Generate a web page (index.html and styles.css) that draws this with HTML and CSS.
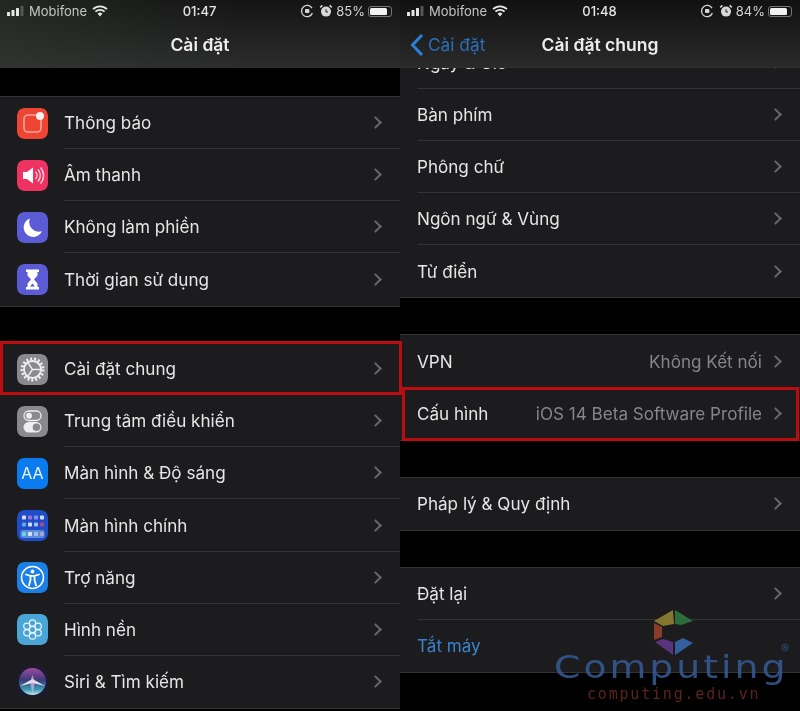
FILE: index.html
```html
<!DOCTYPE html>
<html lang="vi">
<head>
  <meta charset="UTF-8">
  <title>Cài đặt</title>
  <link rel="stylesheet" href="styles.css">
</head>
<body>

  <div class="screens">

    <section class="panel panel-left">
      <header class="top top-left">
        <div class="status">
          <div class="status-side">
            <svg class="signal" width="18" height="10" viewBox="0 0 18 10"><rect x="0" y="6" width="3" height="4" rx=".5" fill="#e6e6e6"/><rect x="4.5" y="4" width="3" height="6" rx=".5" fill="#e6e6e6"/><rect x="9" y="2" width="3" height="8" rx=".5" fill="#e6e6e6"/><rect x="13.5" y="0" width="3" height="10" rx=".5" fill="#555"/></svg>
            <span class="carrier">Mobifone</span>
            <svg class="wifi" width="16" height="12" viewBox="0 0 16 12"><path d="M1 4.2a10 10 0 0 1 14 0M3.4 6.7a6.6 6.6 0 0 1 9.2 0" fill="none" stroke="#e6e6e6" stroke-width="1.8"/><path d="M5.6 8.7a3.3 3.3 0 0 1 4.8 0L8 11.4z" fill="#e6e6e6"/></svg>
          </div>
          <span class="clock">01:47</span>
          <div class="status-side status-right">
            <svg width="14" height="14" viewBox="0 0 14 14"><path d="M12 4.2A5.6 5.6 0 1 0 12.4 9" fill="none" stroke="#d8d8d8" stroke-width="1.3"/><rect x="5" y="5" width="4.4" height="4" rx="1" fill="#d8d8d8"/></svg>
            <svg class="alarm" width="14" height="14" viewBox="0 0 14 14"><circle cx="7" cy="7.6" r="5" fill="#d8d8d8"/><path d="M7 5v3h2" fill="none" stroke="#222" stroke-width="1"/><path d="M1.2 3.4 3.4 1.4M12.8 3.4 10.6 1.4" stroke="#d8d8d8" stroke-width="1.5"/></svg>
            <span class="percent">85%</span>
            <div class="battery"><div class="battery-fill battery-85"></div></div>
          </div>
        </div>
        <div class="nav">
          <span></span>
          <h1 class="title">Cài đặt</h1>
          <span></span>
        </div>
      </header>

      <div class="list list-left">
        <div class="group">
          <div class="row">
            <svg class="icon" viewBox="0 0 31 31"><rect width="31" height="31" rx="7" fill="#ee4433"/><rect x="7" y="7" width="17" height="17" rx="4" fill="none" stroke="#f8a89c" stroke-width="1.6"/><circle cx="23" cy="8" r="4" fill="#fbeeee"/></svg>
            <div class="row-body"><span class="label">Thông báo</span><i class="chev"></i></div>
          </div>
          <div class="row">
            <svg class="icon" viewBox="0 0 31 31"><rect width="31" height="31" rx="7" fill="#ee3362"/><path d="M6 12h4l6-4.500v16l-6-4.500H6z" fill="#fff"/><path d="M18.500 12a5 5 0 0 1 0 7M21 9.500a9 9 0 0 1 0 12M23.500 7.500a12 12 0 0 1 0 16" fill="none" stroke="#fbd0da" stroke-width="1.4"/></svg>
            <div class="row-body"><span class="label">Âm thanh</span><i class="chev"></i></div>
          </div>
          <div class="row">
            <svg class="icon" viewBox="0 0 31 31"><rect width="31" height="31" rx="7" fill="#5b5bd6"/><path d="M13 6.500a9.500 9.500 0 1 0 12 12.500 9.500 9.500 0 0 1-12-12.500z" fill="#fff"/></svg>
            <div class="row-body"><span class="label">Không làm phiền</span><i class="chev"></i></div>
          </div>
          <div class="row">
            <svg class="icon" viewBox="0 0 31 31"><rect width="31" height="31" rx="7" fill="#5b5bd6"/><path d="M9 5.500h13v2.500h-1.500v3.500l-3.500 4 3.500 4V23H22v2.500H9V23h1.500v-3.500l3.500-4-3.500-4V8H9z" fill="#fff"/><path d="M13 22.500l2.500-3 2.500 3z" fill="#5b5bd6"/></svg>
            <div class="row-body"><span class="label">Thời gian sử dụng</span><i class="chev"></i></div>
          </div>
        </div>

        <div class="group">
          <div class="row row-mark-left">
            <svg class="icon" viewBox="0 0 31 31"><rect width="31" height="31" rx="7" fill="#8a8a8e"/><circle cx="15.500" cy="15.500" r="10.500" fill="none" stroke="#eee" stroke-width="3" stroke-dasharray="2 1.9"/><circle cx="15.500" cy="15.500" r="8.500" fill="none" stroke="#eee" stroke-width="1.8"/><path d="M15.500 15.500 10 7.500M15.500 15.500 25 15.500M15.500 15.500 10 23.500" stroke="#eee" stroke-width="1.4"/></svg>
            <div class="row-body"><span class="label">Cài đặt chung</span><i class="chev"></i></div>
          </div>
          <div class="row">
            <svg class="icon" viewBox="0 0 31 31"><rect width="31" height="31" rx="7" fill="#8a8a8e"/><rect x="7" y="5" width="17" height="9.500" rx="4.750" fill="none" stroke="#eee" stroke-width="1.3"/><circle cx="12" cy="9.750" r="3" fill="#eee"/><rect x="6.500" y="16" width="18" height="10.500" rx="5.250" fill="#eee"/><circle cx="19.500" cy="21.250" r="3.800" fill="#8a8a8e"/></svg>
            <div class="row-body"><span class="label">Trung tâm điều khiển</span><i class="chev"></i></div>
          </div>
          <div class="row">
            <div class="icon icon-aa">AA</div>
            <div class="row-body"><span class="label">Màn hình &amp; Độ sáng</span><i class="chev"></i></div>
          </div>
          <div class="row">
            <svg class="icon" viewBox="0 0 31 31"><rect width="31" height="31" rx="7" fill="#1f4dc8"/><g fill="#d6def5"><rect x="5" y="5.500" width="4" height="4" rx="1"/><rect x="11" y="5.500" width="4" height="4" rx="1" fill="#a070d8"/><rect x="17" y="5.500" width="4" height="4" rx="1" fill="#8090e8"/><rect x="23" y="5.500" width="4" height="4" rx="1"/><rect x="5" y="12.500" width="4" height="4" rx="1" fill="#60a8e8"/><rect x="11" y="12.500" width="4" height="4" rx="1"/><rect x="17" y="12.500" width="4" height="4" rx="1" fill="#a0c0e8"/><rect x="23" y="12.500" width="4" height="4" rx="1" fill="#b04888"/></g><rect x="3.500" y="20" width="24" height="8" rx="2" fill="#5c8cdc"/><g fill="#d6e8f5"><rect x="5" y="22" width="4" height="4" rx="1" fill="#70d0d8"/><rect x="11" y="22" width="4" height="4" rx="1"/><rect x="17" y="22" width="4" height="4" rx="1" fill="#a0c0e8"/><rect x="23" y="22" width="4" height="4" rx="1" fill="#a8a8c0"/></g></svg>
            <div class="row-body"><span class="label">Màn hình chính</span><i class="chev"></i></div>
          </div>
          <div class="row">
            <svg class="icon" viewBox="0 0 31 31"><rect width="31" height="31" rx="7" fill="#1b7fe6"/><circle cx="15.500" cy="15.500" r="11" fill="none" stroke="#fff" stroke-width="1.5"/><circle cx="15.500" cy="9.500" r="1.900" fill="#fff"/><path d="M9 12.500l4.500 1.300v4l-1.500 5.700M22 12.500l-4.500 1.300v4l1.500 5.700M13.500 13.800h4" fill="none" stroke="#fff" stroke-width="1.8" stroke-linecap="round" stroke-linejoin="round"/></svg>
            <div class="row-body"><span class="label">Trợ năng</span><i class="chev"></i></div>
          </div>
          <div class="row">
            <svg class="icon" viewBox="0 0 31 31"><rect width="31" height="31" rx="7" fill="#4aa6d6"/><g fill="none" stroke="#eaf6fb" stroke-width="1.2"><circle cx="15.500" cy="15.500" r="3.200"/><circle cx="15.500" cy="9" r="3.200"/><circle cx="15.500" cy="22" r="3.200"/><circle cx="21.100" cy="12.250" r="3.200"/><circle cx="21.100" cy="18.750" r="3.200"/><circle cx="9.900" cy="12.250" r="3.200"/><circle cx="9.900" cy="18.750" r="3.200"/></g></svg>
            <div class="row-body"><span class="label">Hình nền</span><i class="chev"></i></div>
          </div>
          <div class="row">
            <svg class="icon" viewBox="0 0 31 31">
              <defs>
                <linearGradient id="siriOrb" x1="0" y1="0" x2="0" y2="1"><stop offset="0" stop-color="#a04aa0"/><stop offset=".45" stop-color="#3a3a78"/><stop offset=".8" stop-color="#3f9cb8"/><stop offset="1" stop-color="#c8e8f0"/></linearGradient>
              </defs>
              <rect width="31" height="31" rx="7" fill="#1c1a2e"/><circle cx="15.500" cy="15.500" r="13.500" fill="url(#siriOrb)"/><path d="M3 20 15.500 13 28 20 15.500 17z" fill="#fff" opacity=".85"/><path d="M15.500 9 18 16 15.500 27 13 16z" fill="#f0c8ec" opacity=".6"/>
            </svg>
            <div class="row-body"><span class="label">Siri &amp; Tìm kiếm</span><i class="chev"></i></div>
          </div>
        </div>
      </div>
    </section>

    <section class="panel panel-right">
      <header class="top top-right">
        <div class="status">
          <div class="status-side">
            <svg class="signal" width="18" height="10" viewBox="0 0 18 10"><rect x="0" y="6" width="3" height="4" rx=".5" fill="#e6e6e6"/><rect x="4.5" y="4" width="3" height="6" rx=".5" fill="#e6e6e6"/><rect x="9" y="2" width="3" height="8" rx=".5" fill="#e6e6e6"/><rect x="13.5" y="0" width="3" height="10" rx=".5" fill="#555"/></svg>
            <span class="carrier">Mobifone</span>
            <svg class="wifi" width="16" height="12" viewBox="0 0 16 12"><path d="M1 4.2a10 10 0 0 1 14 0M3.4 6.7a6.6 6.6 0 0 1 9.2 0" fill="none" stroke="#e6e6e6" stroke-width="1.8"/><path d="M5.6 8.7a3.3 3.3 0 0 1 4.8 0L8 11.4z" fill="#e6e6e6"/></svg>
          </div>
          <span class="clock">01:48</span>
          <div class="status-side status-right">
            <svg width="14" height="14" viewBox="0 0 14 14"><path d="M12 4.2A5.6 5.6 0 1 0 12.4 9" fill="none" stroke="#d8d8d8" stroke-width="1.3"/><rect x="5" y="5" width="4.4" height="4" rx="1" fill="#d8d8d8"/></svg>
            <svg class="alarm" width="14" height="14" viewBox="0 0 14 14"><circle cx="7" cy="7.6" r="5" fill="#d8d8d8"/><path d="M7 5v3h2" fill="none" stroke="#222" stroke-width="1"/><path d="M1.2 3.4 3.4 1.4M12.8 3.4 10.6 1.4" stroke="#d8d8d8" stroke-width="1.5"/></svg>
            <span class="percent">84%</span>
            <div class="battery"><div class="battery-fill battery-84"></div></div>
          </div>
        </div>
        <div class="nav">
          <div class="back">
            <svg width="14" height="24" viewBox="0 0 14 24"><path d="M12 2 2.500 12l9.500 10" fill="none" stroke="#2a80d8" stroke-width="3"/></svg>
            <span>Cài đặt</span>
          </div>
          <h1 class="title">Cài đặt chung</h1>
          <span></span>
        </div>
      </header>

      <div class="scroll">
        <div class="list list-right">
          <div class="group">
            <div class="row"><div class="row-body"><span class="label">Ngày &amp; Giờ</span><i class="chev"></i></div></div>
            <div class="row"><div class="row-body"><span class="label">Bàn phím</span><i class="chev"></i></div></div>
            <div class="row"><div class="row-body"><span class="label">Phông chữ</span><i class="chev"></i></div></div>
            <div class="row"><div class="row-body"><span class="label">Ngôn ngữ &amp; Vùng</span><i class="chev"></i></div></div>
            <div class="row"><div class="row-body"><span class="label">Từ điển</span><i class="chev"></i></div></div>
          </div>
          <div class="group">
            <div class="row"><div class="row-body"><span class="label">VPN</span><span class="value">Không Kết nối</span><i class="chev"></i></div></div>
            <div class="row row-mark-right"><div class="row-body"><span class="label">Cấu hình</span><span class="value">iOS 14 Beta Software Profile</span><i class="chev"></i></div></div>
          </div>
          <div class="group">
            <div class="row"><div class="row-body"><span class="label">Pháp lý &amp; Quy định</span><i class="chev"></i></div></div>
          </div>
          <div class="group">
            <div class="row"><div class="row-body"><span class="label">Đặt lại</span><i class="chev"></i></div></div>
            <div class="row"><div class="row-body"><span class="label label-link">Tắt máy</span></div></div>
          </div>
        </div>
      </div>
    </section>

  </div>

  <div class="watermark">
    <svg class="wm-logo" width="42" height="46" viewBox="0 0 42 46">
      <path d="M1 12 20 1 21 15 10 17z" fill="#85762f"/>
      <path d="M22 1 40 12 28 16 22 15z" fill="#2e6c3c"/>
      <path d="M1 14 9 18 9 28 1 31z" fill="#8a3c2c"/>
      <path d="M2 33 10 30 20 33 20 46z" fill="#58347e"/>
      <path d="M22 33 30 29 40 34 22 46z" fill="#33609c"/>
    </svg>
    <div class="wm-name">Computing</div>
    <div class="wm-reg">®</div>
    <div class="wm-url">computing.edu.vn</div>
  </div>

</body>
</html>
```

FILE: styles.css
```css
* { box-sizing: border-box; }

html, body {
  margin: 0;
  height: 711px;
  overflow: hidden;
  background: #000;
}

body {
  font-family: Inter, 'Liberation Sans', sans-serif;
  color: #e8e8e8;
  position: relative;
}

.screens {
  display: flex;
  height: 711px;
  filter: blur(0.35px);
}

.panel {
  width: 400px;
  height: 711px;
  background: #000;
}

.panel-left {
  position: relative;
  z-index: 2;
}

.panel-right {
  overflow: hidden;
}

/* status bar + nav bar */
.top {
  height: 68px;
  border-bottom: 1px solid #2f2f31;
}

.top-left {
  background: linear-gradient(90deg, rgba(50,62,50,0.45), rgba(30,30,30,0) 60%), linear-gradient(180deg, #141414, #2c2c2d);
}

.top-right {
  background: linear-gradient(180deg, #111, #2a2a2b);
}

.status {
  display: grid;
  grid-template-columns: 1fr auto 1fr;
  align-items: center;
  height: 22px;
  padding: 0 8px 0 7px;
  font-size: 13px;
  color: #c4c4c4;
}

.status-side {
  display: flex;
  align-items: center;
}

.status-right {
  justify-content: flex-end;
}

.signal { margin-right: 4px; }
.wifi { margin-left: 5px; }
.alarm { margin-left: 5px; }

.clock {
  color: #e4e4e4;
  font-weight: 500;
}

.percent {
  margin-left: 3px;
  color: #d4d4d4;
}

.battery {
  width: 24px;
  height: 11px;
  margin-left: 3px;
  padding: 1px;
  border: 1px solid #777;
  border-radius: 3px;
}

.battery-fill {
  height: 100%;
  background: #f2f2f2;
  border-radius: 1.5px;
}

.battery-85 { width: 85%; }
.battery-84 { width: 84%; }

.nav {
  display: grid;
  grid-template-columns: 1fr auto 1fr;
  align-items: center;
  height: 45px;
  padding: 0 10px;
}

.title {
  margin: 0;
  font-size: 17.5px;
  font-weight: 600;
  color: #ededed;
}

.back {
  display: flex;
  align-items: center;
  gap: 4px;
  font-size: 17.3px;
  color: #2a6fb8;
}

/* lists */
.list-left { padding-top: 28px; }

.scroll {
  height: 643px;
  overflow: hidden;
}

.list-right {
  margin-top: -32px;
}

.group {
  background: #1c1c1e;
  border-top: 1px solid #333335;
  border-bottom: 1px solid #333335;
  margin-bottom: 36px;
}

.list-left .group { margin-bottom: 35.5px; }

.row {
  display: flex;
  align-items: center;
  height: 52.1px;
  padding-left: 17px;
  position: relative;
}

.list-left .row { height: 52.15px; }

.icon {
  flex: none;
  width: 31px;
  height: 31px;
  margin-right: 16px;
  border-radius: 7px;
}

.icon-aa {
  display: flex;
  align-items: center;
  justify-content: center;
  background: #0a7cf0;
  color: #eef6ff;
  font-size: 16px;
}

.row-body {
  flex: 1;
  height: 100%;
  display: flex;
  align-items: center;
  padding-right: 20px;
  border-bottom: 1px solid #333335;
}

.row:last-child .row-body { border-bottom: none; }

.label {
  flex: 1;
  font-size: 17.1px;
  color: #e6e6e6;
  white-space: nowrap;
}

.label-link { color: #3a84cc; }

.value {
  font-size: 17.1px;
  color: #86868a;
  margin-right: 9px;
  white-space: nowrap;
}

.chev {
  width: 9px;
  height: 9px;
  border-top: 2px solid #68686c;
  border-right: 2px solid #68686c;
  transform: rotate(45deg);
}

/* red marks drawn over the rows */
.row-mark-left::after,
.row-mark-right::after {
  content: '';
  position: absolute;
  border: 3px solid #bb0d0f;
  pointer-events: none;
}

.row-mark-left::after {
  top: -2px;
  bottom: 0;
  left: 0;
  right: -2px;
}

.row-mark-right::after {
  top: -1px;
  bottom: -1px;
  left: 2px;
  right: 1px;
}

/* watermark */
.watermark {
  position: absolute;
  left: 540px;
  top: 600px;
  width: 260px;
  height: 111px;
  z-index: 5;
  filter: blur(0.5px);
}

.wm-logo {
  position: absolute;
  left: 113px;
  top: 9px;
}

.wm-name {
  position: absolute;
  left: 14px;
  top: 47px;
  font-family: 'DejaVu Sans', sans-serif;
  font-size: 31.5px;
  letter-spacing: 2.5px;
  line-height: 40px;
  transform: scaleX(1.2);
  transform-origin: left center;
  color: rgba(54,90,150,0.85);
}

.wm-reg {
  position: absolute;
  left: 241px;
  top: 41px;
  font-size: 12px;
  color: rgba(58,98,160,0.75);
}

.wm-url {
  position: absolute;
  left: 47px;
  top: 85px;
  font-family: 'DejaVu Sans Mono', monospace;
  font-size: 15px;
  letter-spacing: 1.8px;
  color: #5c2320;
}
```
